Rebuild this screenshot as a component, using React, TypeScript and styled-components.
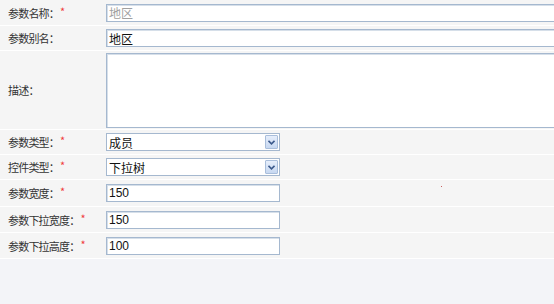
import React from "react";
import styled, { createGlobalStyle } from "styled-components";

const GlobalStyle = createGlobalStyle`
  html, body {
    margin: 0;
    padding: 0;
    background: #f3f4f8;
    font-family: "Liberation Sans", "Noto Sans CJK SC", sans-serif;
    font-size: 12px;
    color: #222;
  }
`;

interface RowProps {
  $h: number;
}

const Form = styled.div`
  position: relative;
  width: 554px;
  height: 304px;
  overflow: hidden;
`;

const Row = styled.div<RowProps>`
  display: grid;
  grid-template-columns: 106px 1fr;
  align-items: center;
  height: ${(p) => p.$h}px;
  background: #f5f5f5;
  border-bottom: 1px solid #ffffff;
`;

const Label = styled.div`
  padding-left: 8px;
  font-family: "Noto Sans CJK SC", sans-serif;
  font-size: 11px;
  letter-spacing: -0.8px;
  color: #333;
  white-space: nowrap;
`;

const Star = styled.span`
  color: #f03c3c;
  margin-left: 1px;
  position: relative;
  top: -2px;
`;

const Cell = styled.div`
  display: flex;
  align-items: center;
`;

const Input = styled.input<{ $wide?: boolean; $muted?: boolean }>`
  box-sizing: border-box;
  width: ${(p) => (p.$wide ? "460px" : "174px")};
  height: 18px;
  padding: 0 2px;
  margin: 0;
  border: 1px solid #a5b8cf;
  box-shadow: inset 1px 1px 0 #d6dfe9;
  background: #fff;
  font-family: "Liberation Sans", "Noto Sans CJK SC", sans-serif;
  font-size: 12px;
  color: ${(p) => (p.$muted ? "#a0a0a0" : "#111")};
  outline: none;
`;

const TextArea = styled.textarea`
  box-sizing: border-box;
  width: 460px;
  height: 75px;
  margin: 0;
  border: 1px solid #a5b8cf;
  box-shadow: inset 1px 1px 0 #d6dfe9;
  background: #fff;
  resize: none;
  outline: none;
`;

const Select = styled.div`
  box-sizing: border-box;
  width: 174px;
  height: 18px;
  display: flex;
  align-items: center;
  justify-content: space-between;
  padding: 0 1px 0 2px;
  border: 1px solid #a5b8cf;
  background: #fff;
  color: #111;
`;

const ArrowBtn = styled.div`
  box-sizing: border-box;
  width: 13px;
  height: 14px;
  display: flex;
  align-items: center;
  justify-content: center;
  border: 1px solid #a9bedb;
  border-radius: 1px;
  background: linear-gradient(#e6eefb, #c7d8f1);
`;

const Dot = styled.span`
  position: absolute;
  left: 441px;
  top: 186px;
  width: 1px;
  height: 1px;
  background: #c86060;
`;

const Chevron = () => (
  <svg width="7" height="5" viewBox="0 0 7 5">
    <path d="M0.5 0.8 L3.5 3.8 L6.5 0.8" fill="none" stroke="#3c5a8c" strokeWidth="1.6" />
  </svg>
);

const App = () => {
  return (
    <>
      <GlobalStyle />
      <Form>
        <Row $h={25}>
          <Label>
            参数名称：<Star>*</Star>
          </Label>
          <Cell>
            <Input $wide $muted defaultValue="地区" readOnly />
          </Cell>
        </Row>
        <Row $h={24}>
          <Label>参数别名：</Label>
          <Cell>
            <Input $wide defaultValue="地区" />
          </Cell>
        </Row>
        <Row $h={78}>
          <Label>描述：</Label>
          <Cell>
            <TextArea />
          </Cell>
        </Row>
        <Row $h={24}>
          <Label>
            参数类型：<Star>*</Star>
          </Label>
          <Cell>
            <Select>
              <span>成员</span>
              <ArrowBtn>
                <Chevron />
              </ArrowBtn>
            </Select>
          </Cell>
        </Row>
        <Row $h={24}>
          <Label>
            控件类型：<Star>*</Star>
          </Label>
          <Cell>
            <Select>
              <span>下拉树</span>
              <ArrowBtn>
                <Chevron />
              </ArrowBtn>
            </Select>
          </Cell>
        </Row>
        <Row $h={26}>
          <Label>
            参数宽度：<Star>*</Star>
          </Label>
          <Cell>
            <Input defaultValue="150" />
          </Cell>
        </Row>
        <Row $h={25}>
          <Label>
            参数下拉宽度：<Star>*</Star>
          </Label>
          <Cell>
            <Input defaultValue="150" />
          </Cell>
        </Row>
        <Row $h={25}>
          <Label>
            参数下拉高度：<Star>*</Star>
          </Label>
          <Cell>
            <Input defaultValue="100" />
          </Cell>
        </Row>
        <Dot />
      </Form>
    </>
  );
};

export default App;
